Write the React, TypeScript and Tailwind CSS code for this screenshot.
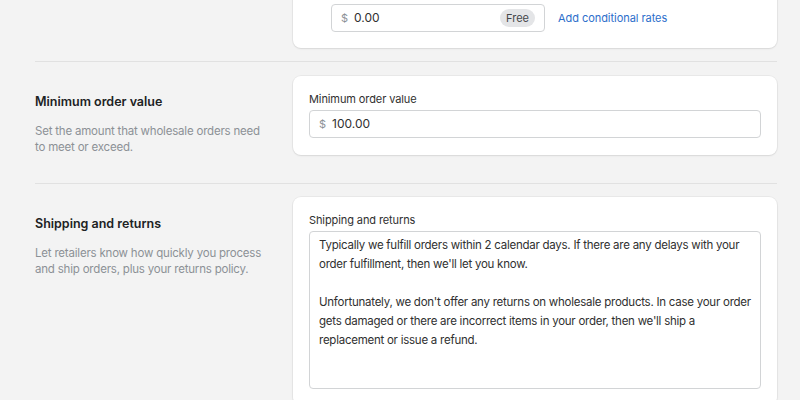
import { useState } from 'react'

export default function App() {
  const [policy, setPolicy] = useState(
    "Typically we fulfill orders within 2 calendar days. If there are any delays with your order fulfillment, then we'll let you know.\n\nUnfortunately, we don't offer any returns on wholesale products. In case your order gets damaged or there are incorrect items in your order, then we'll ship a replacement or issue a refund."
  )

  const card = "bg-white rounded-[8px] shadow-[0_0_0_1px_rgba(0,0,0,0.04),0_1px_2px_rgba(0,0,0,0.08)]"

  return (
    <div className="h-[400px] overflow-hidden bg-[#f3f3f3] font-['Inter','Noto_Sans',sans-serif] text-[#202223]">
      <div className="pl-[35px] pr-[23px] -mt-[29px]">
        {/* Shipping rate (scrolled) */}
        <div className="grid grid-cols-[258px_1fr] pb-[13px]">
          <div />
          <div className={`${card} pt-[12px] pb-[16px] pl-[38px] pr-4`}>
            <p className="text-[11px] leading-[20px] tracking-[-0.1px] text-[#303030]">Shipping price</p>
            <div className="mt-[1px] flex items-center gap-[13px]">
              <div className="flex h-[28px] w-[214px] items-center rounded-[4px] border border-[#d2d4d6] bg-white pl-[9px] pr-[9px] text-[12px]">
                <span className="text-[#8c9196] text-[11px]">$</span>
                <span className="ml-[6px] text-[#303030]">0.00</span>
                <span className="ml-auto rounded-full bg-[#e4e5e7] px-[6px] py-[1px] text-[11px] text-[#44474a]">Free</span>
              </div>
              <a href="#" className="text-[11px] tracking-[-0.05px] text-[#2c6ecb]">Add conditional rates</a>
            </div>
          </div>
        </div>

        {/* Minimum order value */}
        <div className="grid grid-cols-[258px_1fr] border-t border-[#e1e1e1] pt-[14px] pb-[28px]">
          <div className="pt-[16px]">
            <h2 className="text-[12.5px] leading-[20px] font-semibold">Minimum order value</h2>
            <p className="mt-[11px] max-w-[232px] text-[11.5px] leading-[16px] tracking-[-0.2px] text-[#8c9196]">
              Set the amount that wholesale orders need to meet or exceed.
            </p>
          </div>
          <div className={`${card} pt-[13px] pb-[16px] px-4`}>
            <p className="text-[11px] leading-[20px] tracking-[-0.1px] text-[#303030]">Minimum order value</p>
            <div className="mt-[1px] flex h-[28px] items-center rounded-[4px] border border-[#d2d4d6] bg-white pl-[9px] text-[12px]">
              <span className="text-[#8c9196] text-[11px]">$</span>
              <span className="ml-[6px] text-[#303030]">100.00</span>
            </div>
          </div>
        </div>

        {/* Shipping and returns */}
        <div className="grid grid-cols-[258px_1fr] border-t border-[#e1e1e1] pt-[13px] pb-8">
          <div className="pt-[17px]">
            <h2 className="text-[12.5px] leading-[20px] font-semibold">Shipping and returns</h2>
            <p className="mt-[11px] max-w-[232px] text-[11.5px] leading-[16px] tracking-[-0.2px] text-[#8c9196]">
              Let retailers know how quickly you process and ship orders, plus your returns policy.
            </p>
          </div>
          <div className={`${card} pt-[13px] pb-[16px] px-4`}>
            <p className="text-[11px] leading-[20px] tracking-[-0.1px] text-[#303030]">Shipping and returns</p>
            <textarea
              value={policy}
              onChange={(e) => setPolicy(e.target.value)}
              className="mt-[1px] block h-[158px] w-full resize-none rounded-[4px] border border-[#d2d4d6] bg-white px-[9px] pt-[4px] pb-[2px] text-[11.5px] leading-[19px] tracking-[-0.25px] text-[#303030] outline-none"
            />
          </div>
        </div>
      </div>
    </div>
  )
}
